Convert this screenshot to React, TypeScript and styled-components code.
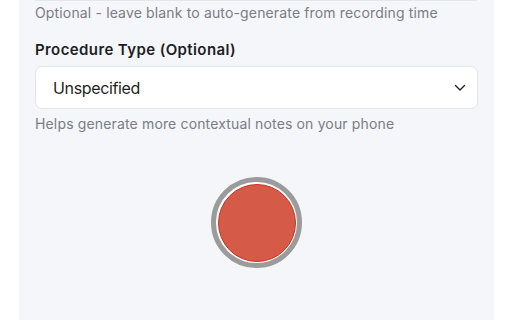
import React from "react";
import styled, { createGlobalStyle } from "styled-components";

const Global = createGlobalStyle`
  html, body { margin: 0; padding: 0; background: #ffffff; }
  body { font-family: Inter, "Liberation Sans", Arial, sans-serif; }
  * { box-sizing: border-box; }
`;

const Page = styled.div`
  width: 512px;
  height: 320px;
  overflow: hidden;
  display: flex;
  justify-content: center;
`;

const Panel = styled.div`
  width: 475px;
  height: 320px;
  margin-left: 1px;
  background: #f5f6fa;
  padding: 0 16px;
  display: flex;
  flex-direction: column;
`;

const InputTail = styled.div`
  height: 1px;
  margin-right: 1px;
  background: #e4e6ea;
`;

const Hint = styled.p<{ $top: number }>`
  margin: ${(p) => p.$top}px 0 0 0;
  font-size: 14px;
  line-height: 18px;
  letter-spacing: 0.15px;
  color: #7a7d83;
`;

const Label = styled.label`
  margin-top: 19px;
  font-size: 15px;
  line-height: 18px;
  font-weight: 600;
  letter-spacing: 0.4px;
  color: #1d1f24;
`;

const SelectBox = styled.div`
  margin-top: 7px;
  height: 43px;
  background: #ffffff;
  border: 1px solid #e3e5e9;
  border-radius: 7px;
  display: flex;
  align-items: center;
  justify-content: space-between;
  padding: 0 11px 0 17px;
  font-size: 16px;
  letter-spacing: -0.35px;
  color: #1d1f24;
`;

const RecordArea = styled.div`
  display: flex;
  justify-content: center;
  margin-top: 44px;
`;

const RecordButton = styled.button`
  width: 91px;
  height: 91px;
  border-radius: 50%;
  border: 5px solid #9b9b9b;
  background: #ffffff;
  padding: 1.5px;
  cursor: pointer;
`;

const RecordDot = styled.span`
  display: block;
  width: 100%;
  height: 100%;
  border-radius: 50%;
  background: #d65a48;
  border: 1px solid #c8321f;
`;

export default function App() {
  return (
    <>
      <Global />
      <Page>
        <Panel>
          <InputTail />
          <Hint $top={3}>Optional - leave blank to auto-generate from recording time</Hint>
          <Label>Procedure Type (Optional)</Label>
          <SelectBox>
            <span>Unspecified</span>
            <svg width="12" height="8" viewBox="0 0 12 8" fill="none">
              <path d="M1.5 1.5 L6 6 L10.5 1.5" stroke="#222" strokeWidth="1.4" strokeLinecap="round" strokeLinejoin="round" />
            </svg>
          </SelectBox>
          <Hint $top={6}>Helps generate more contextual notes on your phone</Hint>
          <RecordArea>
            <RecordButton aria-label="Record">
              <RecordDot />
            </RecordButton>
          </RecordArea>
        </Panel>
      </Page>
    </>
  );
}
